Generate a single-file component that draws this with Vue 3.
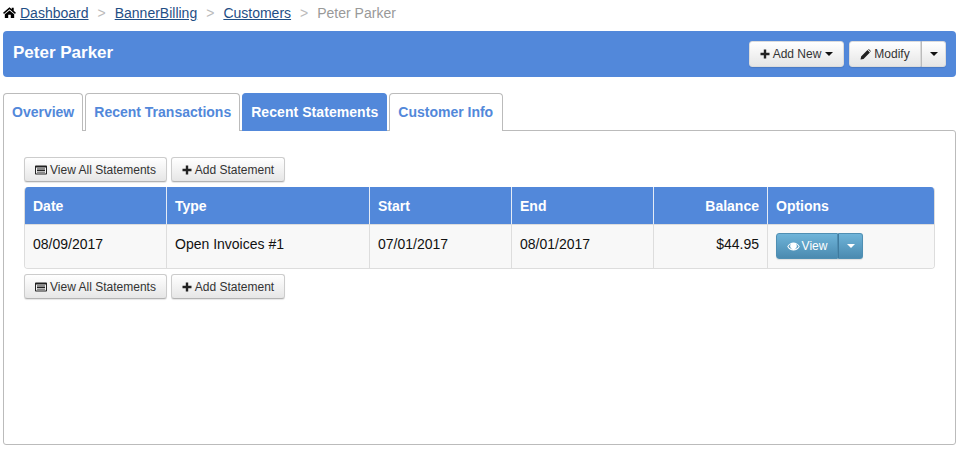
<script setup>
const crumbs = ['Dashboard', 'BannerBilling', 'Customers']
const tabs = [
  { label: 'Overview', active: false },
  { label: 'Recent Transactions', active: false },
  { label: 'Recent Statements', active: true },
  { label: 'Customer Info', active: false }
]
const cols = [
  { label: 'Date', value: '08/09/2017' },
  { label: 'Type', value: 'Open Invoices #1' },
  { label: 'Start', value: '07/01/2017' },
  { label: 'End', value: '08/01/2017' }
]
</script>

<template>
  <div class="page">
    <nav class="crumbs">
      <svg class="home" viewBox="0 0 14 12" width="13" height="11"><path d="M7 0.3 L0 6.4 L1 7.6 L7 2.5 L13 7.6 L14 6.4 L11.6 4.2 V0.8 H9.4 V2.4 Z M1.9 8 V12 H5.6 V8.4 H8.4 V12 H12.1 V8 L7 3.7 Z" fill="#000"/></svg>
      <template v-for="c in crumbs" :key="c">
        <a class="crumb">{{ c }}</a>
        <span class="sep">&gt;</span>
      </template>
      <span class="current">Peter Parker</span>
    </nav>

    <header class="head">
      <h1>Peter Parker</h1>
      <div class="head-actions">
        <button class="btn add-new">
          <svg class="ic" viewBox="0 0 10 10" width="10" height="10"><path d="M3.8 0.5 H6.2 V3.8 H9.5 V6.2 H6.2 V9.5 H3.8 V6.2 H0.5 V3.8 H3.8 Z" fill="#222"/></svg>
          Add New<i class="caret"></i>
        </button>
        <div class="group">
          <button class="btn modify">
            <svg class="ic" viewBox="0 0 10 10" width="11" height="11"><path d="M0.5 9.5 L1 6.8 L6.8 1 L9 3.2 L3.2 9 Z M7.4 0.4 L8 0 L10 2 L9.6 2.6 Z" fill="#222"/></svg>
            Modify
          </button>
          <button class="btn drop"><i class="caret"></i></button>
        </div>
      </div>
    </header>

    <div class="tabs">
      <a v-for="t in tabs" :key="t.label" class="tab" :class="{ active: t.active }">{{ t.label }}</a>
    </div>

    <section class="panel">
      <div class="toolbar">
        <button class="btn wide">
          <svg class="ic" viewBox="0 0 12 10" width="12" height="10"><path fill-rule="evenodd" d="M0.8 0.5 H11.2 A0.8 0.8 0 0 1 12 1.3 V8.7 A0.8 0.8 0 0 1 11.2 9.5 H0.8 A0.8 0.8 0 0 1 0 8.7 V1.3 A0.8 0.8 0 0 1 0.8 0.5 Z M1 2.6 V8.5 H11 V2.6 Z M2 3.5 H10 V4.4 H2 Z M2 5.1 H10 V6 H2 Z M2 6.7 H10 V7.6 H2 Z" fill="#222"/></svg>
          View All Statements
        </button>
        <button class="btn narrow">
          <svg class="ic" viewBox="0 0 10 10" width="10" height="10"><path d="M3.8 0.5 H6.2 V3.8 H9.5 V6.2 H6.2 V9.5 H3.8 V6.2 H0.5 V3.8 H3.8 Z" fill="#222"/></svg>
          Add Statement
        </button>
      </div>

      <div class="table">
        <div class="row th">
          <div v-for="c in cols" :key="c.label" class="cell">{{ c.label }}</div>
          <div class="cell right">Balance</div>
          <div class="cell">Options</div>
        </div>
        <div class="row td">
          <div v-for="c in cols" :key="c.label" class="cell">{{ c.value }}</div>
          <div class="cell right">$44.95</div>
          <div class="cell opts">
            <div class="vgroup">
              <button class="vbtn view">
                <svg viewBox="0 0 14 10" width="13" height="9"><path fill-rule="evenodd" d="M0 5 C2 1.6 4.4 0.5 7 0.5 C9.6 0.5 12 1.6 14 5 C12 8.4 9.6 9.5 7 9.5 C4.4 9.5 2 8.4 0 5 Z M4.2 2.2 C3 2.8 2 3.8 1.3 5 C2.6 6.9 4.7 8.2 7 8.2 C9.3 8.2 11.4 6.9 12.7 5 C12 3.8 11 2.8 9.8 2.2 A3.6 3.6 0 1 1 4.2 2.2 Z" fill="#fff"/></svg>
                View
              </button>
              <button class="vbtn vdrop"><i class="caret white"></i></button>
            </div>
          </div>
        </div>
      </div>

      <div class="toolbar bottom">
        <button class="btn wide">
          <svg class="ic" viewBox="0 0 12 10" width="12" height="10"><path fill-rule="evenodd" d="M0.8 0.5 H11.2 A0.8 0.8 0 0 1 12 1.3 V8.7 A0.8 0.8 0 0 1 11.2 9.5 H0.8 A0.8 0.8 0 0 1 0 8.7 V1.3 A0.8 0.8 0 0 1 0.8 0.5 Z M1 2.6 V8.5 H11 V2.6 Z M2 3.5 H10 V4.4 H2 Z M2 5.1 H10 V6 H2 Z M2 6.7 H10 V7.6 H2 Z" fill="#222"/></svg>
          View All Statements
        </button>
        <button class="btn narrow">
          <svg class="ic" viewBox="0 0 10 10" width="10" height="10"><path d="M3.8 0.5 H6.2 V3.8 H9.5 V6.2 H6.2 V9.5 H3.8 V6.2 H0.5 V3.8 H3.8 Z" fill="#222"/></svg>
          Add Statement
        </button>
      </div>
    </section>
  </div>
</template>

<style scoped>
.page {
  width: 963px;
  height: 457px;
  box-sizing: border-box;
  padding: 0 7px 0 3px;
  background: #fff;
  font-family: "Liberation Sans", Arial, sans-serif;
  font-size: 14px;
  color: #111;
  overflow: hidden;
}
.crumbs {
  height: 31px;
  padding-bottom: 6px;
  box-sizing: border-box;
  display: flex;
  align-items: center;
  font-size: 14px;
}
.home { margin-right: 4px; }
.crumb { color: #1f4e85; text-decoration: underline; }
.sep { color: #bbb; margin: 0 9px; }
.current { color: #999; }
.head {
  height: 46px;
  background: #5288da;
  border-radius: 4px;
  display: flex;
  align-items: center;
  justify-content: space-between;
  padding: 0 10px;
}
h1 {
  margin: 0 0 3px;
  font-size: 17px;
  font-weight: 700;
  color: #fff;
}
.head-actions { display: flex; gap: 5px; }
.group { display: flex; }
.btn {
  height: 26px;
  padding: 0 10px;
  box-sizing: border-box;
  display: inline-flex;
  align-items: center;
  justify-content: center;
  gap: 3px;
  font-family: inherit;
  font-size: 12px;
  white-space: nowrap;
  color: #333;
  background: linear-gradient(#fff, #e6e6e6);
  border: 1px solid #ccc;
  border-bottom-color: #b3b3b3;
  border-radius: 3px;
  box-shadow: 0 1px 1px rgba(0, 0, 0, .1);
}
.ic { flex: none; }
.wide { width: 143px; }
.narrow { width: 114px; }
.add-new { width: 95px; border-color: #dcdcdc; }
.add-new .caret { margin-left: 1px; }
.modify { width: 72px; border-radius: 3px 0 0 3px; border-color: #dcdcdc; }
.drop { width: 25px; padding: 0; border-radius: 0 3px 3px 0; border-color: #dcdcdc #dcdcdc #dcdcdc #bbb; }
.caret {
  display: inline-block;
  width: 0;
  height: 0;
  border-left: 4px solid transparent;
  border-right: 4px solid transparent;
  border-top: 4px solid #111;
}
.caret.white { border-top-color: #fff; }
.tabs {
  display: flex;
  gap: 2px;
  margin-top: 16px;
  height: 38px;
  position: relative;
  z-index: 1;
}
.tab {
  box-sizing: border-box;
  height: 38px;
  padding: 0 8px 2px;
  display: flex;
  align-items: center;
  font-weight: 700;
  font-size: 14px;
  color: #5288da;
  background: #fff;
  border: 1px solid #bbb;
  border-bottom: 0;
  border-radius: 4px 4px 0 0;
}
.tab:nth-child(4) { padding-right: 9px; }
.tab.active {
  background: #5288da;
  border-color: #5288da;
  color: #fff;
  letter-spacing: .06px;
}
.panel {
  box-sizing: border-box;
  margin-top: -1px;
  height: 315px;
  border: 1px solid #bbb;
  border-radius: 0 3px 3px 3px;
  padding: 26px 20px 0;
}
.toolbar { display: flex; gap: 4px; }
.toolbar .btn { height: 25px; }
.toolbar.bottom { margin-top: 5px; }
.table {
  margin-top: 5px;
  border: 1px solid #ddd;
  border-top: 0;
  border-radius: 4px;
  overflow: hidden;
  width: 911px;
  box-sizing: border-box;
}
.row {
  display: grid;
  grid-template-columns: 142px 203px 142px 142px 114px 1fr;
}
.cell {
  box-sizing: border-box;
  padding: 0 8px;
  border-right: 1px solid #ddd;
  display: flex;
  align-items: center;
}
.cell:last-child { border-right: 0; }
.right { justify-content: flex-end; }
.th { height: 37px; background: #5288da; color: #fff; font-weight: 700; border-bottom: 1px solid #ddd; }
.th .cell { border-right-color: #e4ebf6; }
.td { height: 43px; background: #f8f8f8; color: #111; }
.td .cell { padding-bottom: 6px; }
.td .opts { padding-bottom: 0; align-items: center; }
.vgroup { display: flex; margin-bottom: 1px; }
.vbtn {
  height: 26px;
  box-sizing: border-box;
  display: inline-flex;
  align-items: center;
  justify-content: center;
  gap: 2px;
  font-family: inherit;
  font-size: 12px;
  color: #fff;
  background: linear-gradient(#6fb4d9, #4a8ab0);
  border: 1px solid #4f8fb3;
  box-shadow: 0 1px 1px rgba(0, 0, 0, .1);
  padding: 0;
}
.view { width: 62px; border-radius: 3px 0 0 3px; }
.vdrop { width: 25px; border-radius: 0 3px 3px 0; border-left-color: #3f7a9e; }
</style>
